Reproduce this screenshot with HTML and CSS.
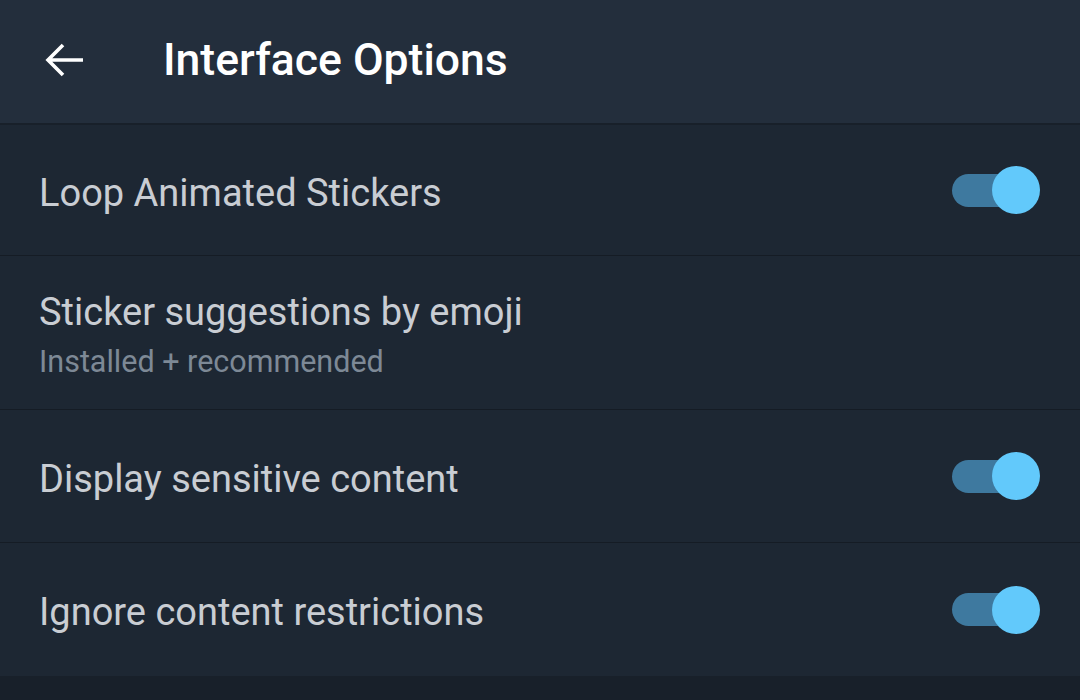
FILE: index.html
```html
<!DOCTYPE html>
<html>
<head>
<meta charset="utf-8">
<link rel="stylesheet" href="styles.css">
</head>
<body>
<div class="app">
  <header class="topbar">
    <button class="back" aria-label="Back">
      <svg width="40" height="34" viewBox="0 0 40 34">
        <path d="M38 17H3M18 2L3 17l15 15" fill="none" stroke="#fff" stroke-width="3.6" stroke-linecap="butt" stroke-linejoin="miter"/>
      </svg>
    </button>
    <h1 class="title">Interface Options</h1>
  </header>
  <div class="list">
    <div class="row r1">
      <div class="label">Loop Animated Stickers</div>
      <div class="switch on"><span class="knob"></span></div>
    </div>
    <div class="row r2">
      <div class="texts">
        <div class="label">Sticker suggestions by emoji</div>
        <div class="sub">Installed + recommended</div>
      </div>
    </div>
    <div class="row r3">
      <div class="label">Display sensitive content</div>
      <div class="switch on"><span class="knob"></span></div>
    </div>
    <div class="row r4">
      <div class="label">Ignore content restrictions</div>
      <div class="switch on"><span class="knob"></span></div>
    </div>
  </div>
  <div class="bottom"></div>
</div>
</body>
</html>
```
FILE: styles.css
```css
* { box-sizing: border-box; }
html, body { margin: 0; padding: 0; }
body {
  width: 1080px;
  height: 700px;
  overflow: hidden;
  background: #18202a;
  font-family: Roboto, "Noto Sans", sans-serif;
}
.app { display: flex; flex-direction: column; height: 700px; }
.topbar {
  height: 125px;
  background: #232e3c;
  display: flex;
  align-items: center;
  border-bottom: 2px solid #18202a;
  padding-bottom: 4px;
}
.back {
  background: none;
  border: 0;
  padding: 0;
  margin-left: 45px;
  width: 40px;
  height: 34px;
  display: flex;
}
.title {
  margin: 0 0 0 78px;
  color: #ffffff;
  font-weight: 500;
  font-size: 44.5px;
}
.list { display: flex; flex-direction: column; background: #1d2733; }
.row {
  display: flex;
  align-items: center;
  justify-content: space-between;
  padding: 0 40px 0 39px;
  border-bottom: 1px solid #151c25;
}
.r1 { height: 131px; }
.r2 { height: 154px; }
.r3 { height: 133px; }
.r4 { height: 133px; border-bottom: 0; }
.label {
  color: #c9cdd3;
  font-size: 38px;
  padding-top: 5px;
}
.texts { display: flex; flex-direction: column; gap: 10px; padding-top: 4px; }
.texts .label { padding-top: 0; }
.sub { color: #7d8996; font-size: 30.5px; }
.switch {
  position: relative;
  width: 88px;
  height: 48px;
  display: flex;
  align-items: center;
}
.switch::before {
  content: "";
  display: block;
  width: 64px;
  height: 33px;
  border-radius: 17px;
  background: #3e799f;
}
.knob {
  position: absolute;
  right: 0;
  top: 0;
  width: 48px;
  height: 48px;
  border-radius: 50%;
  background: #62c9fb;
}
.bottom { flex: 1; background: #18202a; }
```
